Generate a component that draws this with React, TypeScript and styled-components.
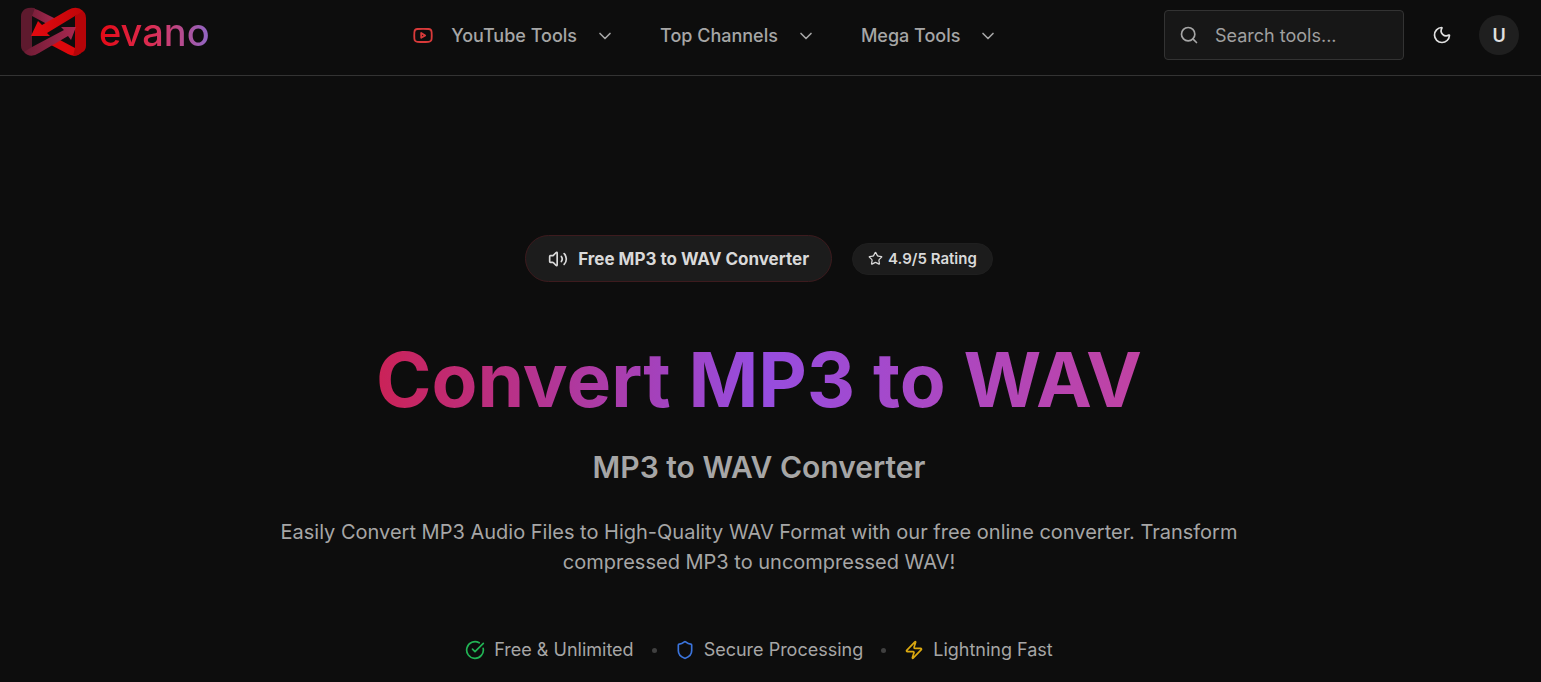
import React from 'react';
import styled, { createGlobalStyle } from 'styled-components';
import { ChevronDown, CircleCheckBig, Moon, Search, Shield, Star, Volume2, Zap } from 'lucide-react';

const GlobalStyle = createGlobalStyle`
  *, *::before, *::after { box-sizing: border-box; }
  body {
    margin: 0;
    background: #0d0d0d;
    color: #d9d9d9;
    font-family: Inter, "Liberation Sans", sans-serif;
  }
  button, input { font: inherit; color: inherit; }
  a { color: inherit; text-decoration: none; }
`;

const Header = styled.header`
  display: flex;
  align-items: center;
  justify-content: space-between;
  padding: 10px 22px 15px 20px;
  border-bottom: 1px solid #333333;
`;

const Brand = styled.a`
  display: flex;
  align-items: center;
  gap: 12px;
  height: 50px;
  padding-bottom: 6px;
`;

const LogoMark = styled.svg`
  display: block;
  width: 67px;
  height: 50px;
`;

const BrandName = styled.span`
  font-size: 38px;
  line-height: 48px;
  font-weight: 500;
  background: linear-gradient(90deg, #e50914 0%, #d93058 50%, #8f68c8 100%);
  background-clip: text;
  -webkit-background-clip: text;
  color: transparent;
`;

const Nav = styled.nav`
  display: flex;
  align-items: center;
  gap: 45px;
  padding: 2px 0 0 38px;
`;

const NavButton = styled.button`
  display: flex;
  align-items: center;
  padding: 0;
  border: 0;
  background: none;
  color: #a6a6a6;
  font-size: 18px;
  line-height: 26px;
  font-weight: 500;
  cursor: pointer;
`;

const VideoIcon = styled.svg`
  width: 20px;
  height: 20px;
  margin-right: 18px;
`;

const Chevron = styled(ChevronDown)`
  margin-left: 18px;
`;

const Tools = styled.div`
  display: flex;
  align-items: center;
`;

const SearchBox = styled.label`
  display: flex;
  align-items: center;
  gap: 16px;
  width: 240px;
  height: 50px;
  padding: 0 14px;
  border: 1px solid #333333;
  border-radius: 4px;
  background: #171717;
  color: #a6a6a6;
`;

const SearchInput = styled.input`
  flex: 1;
  min-width: 0;
  padding: 2px 0 0;
  border: 0;
  outline: 0;
  background: none;
  font-size: 18px;
  line-height: 26px;
  &::placeholder { color: #a0a0a0; opacity: 1; }
`;

const ThemeButton = styled.button`
  display: grid;
  place-items: center;
  width: 39px;
  height: 40px;
  margin: 0 18px;
  padding: 0;
  border: 0;
  background: none;
  color: #e0e0e0;
  cursor: pointer;
`;

const Avatar = styled.button`
  width: 40px;
  height: 40px;
  padding: 0;
  border: 0;
  border-radius: 50%;
  background: #1f1f1f;
  color: #e0e0e0;
  font-size: 18px;
  font-weight: 600;
  cursor: pointer;
`;

const Hero = styled.main`
  display: flex;
  flex-direction: column;
  align-items: center;
  padding: 159px 43px 20px 20px;
  text-align: center;
`;

const Badges = styled.div`
  display: flex;
  align-items: center;
  gap: 20px;
`;

const Badge = styled.span<{ $large?: boolean }>`
  display: flex;
  align-items: center;
  gap: ${({ $large }) => ($large ? 10 : 5)}px;
  height: ${({ $large }) => ($large ? 47 : 32)}px;
  padding: 0 ${({ $large }) => ($large ? 22 : 15)}px;
  border: 1px solid ${({ $large }) => ($large ? '#3d1b1e' : '#1f1f1f')};
  border-radius: 24px;
  background: #1c1c1c;
  font-size: ${({ $large }) => ($large ? 17 : 15)}px;
  font-weight: ${({ $large }) => ($large ? 700 : 600)};
`;

const Title = styled.h1`
  margin: 59px 0 0;
  font-size: 75px;
  line-height: 78px;
  font-weight: 700;
  background: linear-gradient(90deg, #cb2257 0%, #964de0 50%, #c142a2 100%);
  background-clip: text;
  -webkit-background-clip: text;
  color: transparent;
`;

const Subtitle = styled.h2`
  margin: 28px 0 0;
  color: #a6a6a6;
  font-size: 30px;
  line-height: 40px;
  font-weight: 600;
`;

const Lead = styled.p`
  max-width: 960px;
  margin: 30px 0 0;
  color: #a6a6a6;
  font-size: 20px;
  line-height: 30px;
`;

const Features = styled.ul`
  display: flex;
  align-items: center;
  gap: 18px;
  margin: 60px 0 0;
  padding: 0;
  list-style: none;
`;

const Feature = styled.li<{ $accent: string }>`
  display: flex;
  align-items: center;
  gap: 9px;
  color: #a6a6a6;
  font-size: 18px;
  line-height: 26px;
  svg { color: ${({ $accent }) => $accent}; }
`;

const Dot = styled.li`
  width: 5px;
  height: 5px;
  border-radius: 50%;
  background: #404040;
`;

function EvanoLogo() {
  return (
    <LogoMark viewBox="0 0 67 50" aria-hidden="true">
      <defs>
        <linearGradient id="wine" x1="0" y1="0" x2="1" y2="0">
          <stop offset="0" stopColor="#6e1c34" />
          <stop offset="1" stopColor="#a82850" />
        </linearGradient>
        <linearGradient id="red" x1="0" y1="0" x2="1" y2="0">
          <stop offset="0" stopColor="#e40a10" />
          <stop offset="1" stopColor="#c00508" />
        </linearGradient>
      </defs>
      <path d="M6 4 Q11 0 18 3 L36 12 L27 17 L12 9Z" fill="url(#wine)" />
      <path d="M1 9 Q1 5 5 2 Q9 0 15 1 L12 9 V41 L6 46 Q1 44 1 39Z" fill="#5e1a2e" />
      <path d="M61 46 Q55 51 48 47 L31 38 L40 33 L55 41Z" fill="#dc080c" />
      <path d="M61 3 Q66 5 66 11 V39 Q66 44 61 46 Q58 49 53 49 L55 41 V9Z" fill="#b50408" />
      <path d="M4 45 L12 40 L44 23 L41 20 L56 20 L51 33 L48 29 L19 46 Q10 52 4 45Z" fill="url(#wine)" />
      <path d="M63 4 L55 9 L27 26 L30 29 L11 29 L18 14 L22 18 L48 3 Q57 -2 63 4Z" fill="url(#red)" />
    </LogoMark>
  );
}

export default function App() {
  return (
    <>
      <GlobalStyle />
      <Header>
        <Brand href="#" aria-label="evano">
          <EvanoLogo />
          <BrandName>evano</BrandName>
        </Brand>
        <Nav>
          <NavButton>
            <VideoIcon viewBox="0 0 20 20" fill="none" stroke="#d93a3a" strokeWidth="1.8" strokeLinejoin="round" aria-hidden="true">
              <path d="M4.5 3 Q10 2.6 15.5 3 Q18.4 3.2 18.6 6 Q18.9 9.5 18.6 13 Q18.4 15.6 15.5 15.8 Q10 16.2 4.5 15.8 Q1.6 15.6 1.4 13 Q1.1 9.5 1.4 6 Q1.6 3.2 4.5 3Z" />
              <path d="M8.2 7 L12.2 9.4 L8.2 11.8Z" />
            </VideoIcon>
            YouTube Tools
            <Chevron size={20} strokeWidth={2} />
          </NavButton>
          <NavButton>
            Top Channels
            <Chevron size={20} strokeWidth={2} />
          </NavButton>
          <NavButton>
            Mega Tools
            <Chevron size={20} strokeWidth={2} />
          </NavButton>
        </Nav>
        <Tools>
          <SearchBox>
            <Search size={20} strokeWidth={2} />
            <SearchInput type="text" placeholder="Search tools..." aria-label="Search tools" />
          </SearchBox>
          <ThemeButton aria-label="Toggle theme">
            <Moon size={20} strokeWidth={2} />
          </ThemeButton>
          <Avatar aria-label="Account">U</Avatar>
        </Tools>
      </Header>
      <Hero>
        <Badges>
          <Badge $large>
            <Volume2 size={20} strokeWidth={2} />
            Free MP3 to WAV Converter
          </Badge>
          <Badge>
            <Star size={15} strokeWidth={2} />
            4.9/5 Rating
          </Badge>
        </Badges>
        <Title>Convert MP3 to WAV</Title>
        <Subtitle>MP3 to WAV Converter</Subtitle>
        <Lead>
          Easily Convert MP3 Audio Files to High-Quality WAV Format with our free online converter. Transform
          compressed MP3 to uncompressed WAV!
        </Lead>
        <Features>
          <Feature $accent="#22b455"><CircleCheckBig size={20} />Free &amp; Unlimited</Feature>
          <Dot aria-hidden="true" />
          <Feature $accent="#3b74dc"><Shield size={20} />Secure Processing</Feature>
          <Dot aria-hidden="true" />
          <Feature $accent="#dba910"><Zap size={20} />Lightning Fast</Feature>
        </Features>
      </Hero>
    </>
  );
}
